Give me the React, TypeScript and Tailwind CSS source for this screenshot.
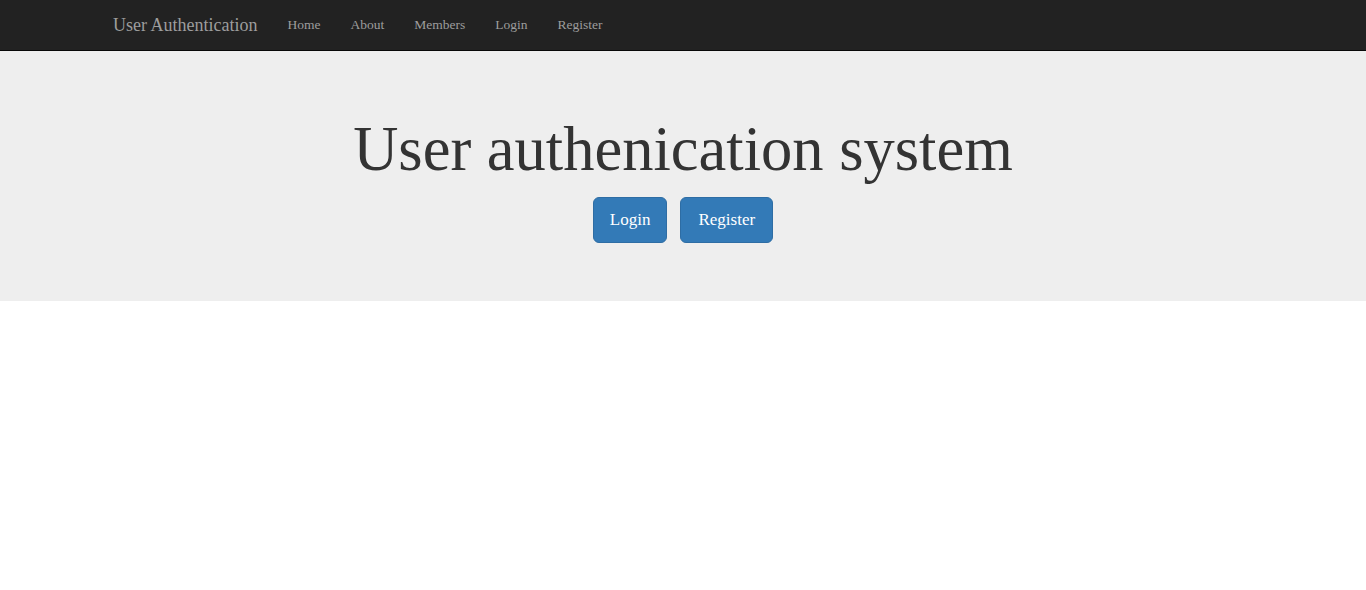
export default function App() {
  const links = ["Home", "About", "Members", "Login", "Register"];
  return (
    <div className="min-h-screen bg-white font-['Liberation_Serif',serif] text-[#333]">
      <nav className="h-[51px] border-b border-[#080808] bg-[#222]">
        <div className="mx-auto flex h-[50px] w-[1170px] items-center px-[15px]">
          <a className="pr-[15px] text-[18px] text-[#9d9d9d]">User Authentication</a>
          <ul className="flex">
            {links.map((l) => (
              <li key={l}>
                <a className="block px-[15px] text-[13.5px] text-[#9d9d9d]">{l}</a>
              </li>
            ))}
          </ul>
        </div>
      </nav>
      <section className="h-[250px] bg-[#eee] pt-[64px]">
        <div className="text-center">
          <h1 className="text-[62.5px] leading-[1.1]">User authenication system</h1>
          <div className="mt-[13px] flex justify-center gap-[13px]">
            <a className="rounded-[6px] border border-[#2e6da4] bg-[#337ab7] px-[16px] py-[10px] text-[17px] leading-[24px] text-white">
              Login
            </a>
            <a className="rounded-[6px] border border-[#2e6da4] bg-[#337ab7] px-[17px] py-[10px] text-[17px] leading-[24px] text-white">
              Register
            </a>
          </div>
        </div>
      </section>
    </div>
  );
}
